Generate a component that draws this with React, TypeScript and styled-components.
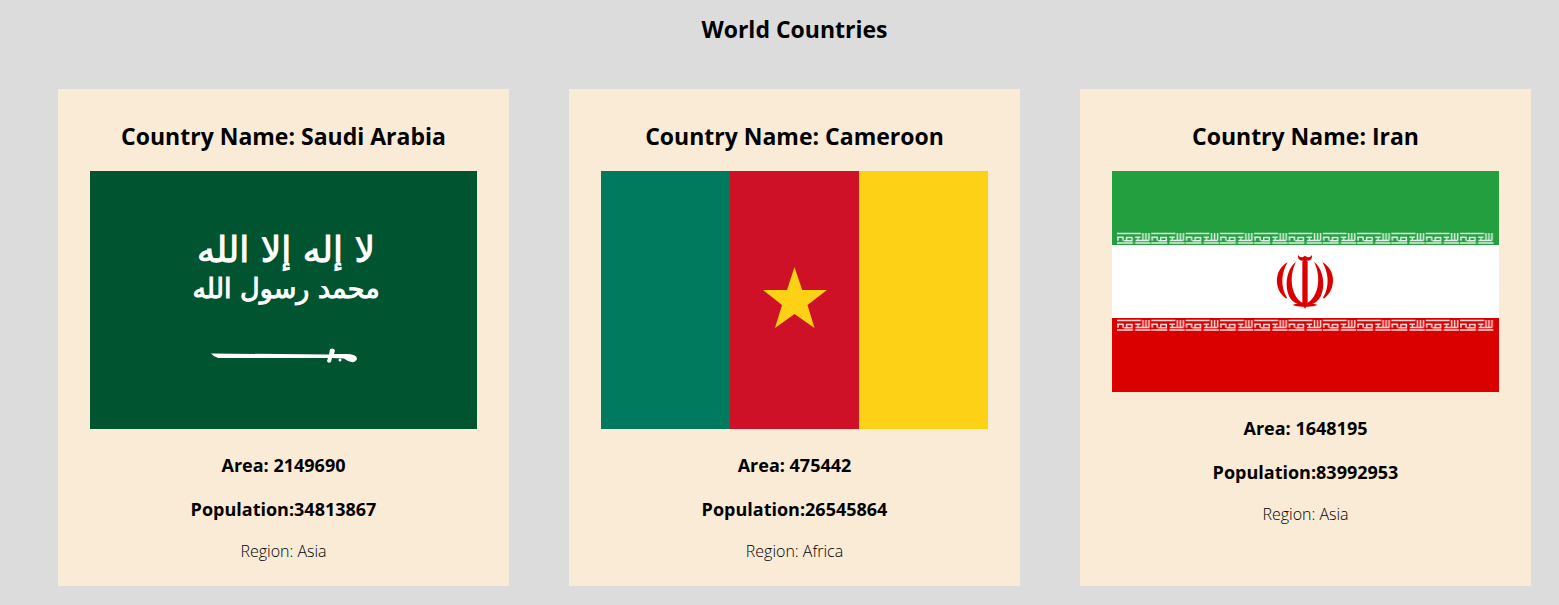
import React from "react";
import styled, { createGlobalStyle } from "styled-components";

const GlobalStyle = createGlobalStyle`
  body {
    margin: 0;
    background: #dcdcdc;
    color: #000;
    font-family: "Segoe UI", "Open Sans", "Noto Sans", sans-serif;
  }
`;

const Page = styled.main`
  padding: 11px 28px 19px 58px;
`;

const PageTitle = styled.h1`
  margin: 0 0 42px;
  font-size: 23px;
  line-height: 36px;
  font-weight: 700;
  text-align: center;
`;

const CountryGrid = styled.section`
  display: grid;
  grid-template-columns: repeat(3, minmax(0, 1fr));
  gap: 60px;
`;

const Card = styled.article`
  padding: 31px 32px 23px;
  background: #faebd7;
  text-align: center;
`;

const CountryName = styled.h2`
  margin: 0 0 19px;
  font-size: 23px;
  line-height: 32px;
  font-weight: 700;
`;

const Flag = styled.svg`
  display: block;
  width: 100%;
  height: auto;
`;

const Fact = styled.h3`
  margin: 24px 0 0;
  font-size: 18px;
  line-height: 24px;
  font-weight: 700;

  & + & {
    margin-top: 20px;
  }
`;

const Region = styled.p`
  margin: 18px 0 0;
  font-size: 16px;
  line-height: 24px;
  font-weight: 300;
`;

const Inscription = styled.text`
  fill: #fff;
  stroke: #fff;
  stroke-width: 1px;
  font-family: "DejaVu Sans", sans-serif;
  text-anchor: middle;
`;

const InscriptionLine = styled.tspan<{ $size: number }>`
  font-size: ${({ $size }) => $size}px;
`;

function SaudiFlag() {
  return (
    <Flag viewBox="0 0 387 258" role="img" aria-label="Flag of Saudi Arabia">
      <rect width="387" height="258" fill="#00542f" />
      <Inscription>
        <InscriptionLine $size={36} x="196" y="91">لا إله إلا الله</InscriptionLine>
        <InscriptionLine $size={27} x="196" y="127">محمد رسول الله</InscriptionLine>
      </Inscription>
      <g fill="#fff">
        <path d="M121 182.5 L239 183.5 L240 178 Q243 176.500 245 179 L244 183 L256 183 Q267 183 267 188 Q265 193 258 190 L254 187.500 L242 187 L241 191 Q238 193 237 190 L238 187 L128 187 Q124 186 121 182.500Z" />
        <circle cx="250" cy="189" r="1.500" />
      </g>
    </Flag>
  );
}

function CameroonFlag() {
  return (
    <Flag viewBox="0 0 387 258" role="img" aria-label="Flag of Cameroon">
      <rect width="130" height="258" fill="#007a5e" />
      <rect x="129" width="130" height="258" fill="#ce1126" />
      <rect x="258" width="129" height="258" fill="#fcd116" />
      <path
        fill="#fcd116"
        d="M193.500 96 L201.200 119 L226 119 L206.500 134 L213.500 157 L193.500 143 L174 157 L181 134 L162 119 L186 119Z"
      />
    </Flag>
  );
}

function IranFlag() {
  return (
    <Flag viewBox="0 0 387 221" role="img" aria-label="Flag of Iran">
      <defs>
        <pattern id="kufic" width="34.300" height="13" patternUnits="userSpaceOnUse">
          <path
            fill="none"
            stroke="#fff"
            strokeWidth="1.500"
            strokeOpacity="0.85"
            d="M0 1.500H24M0 11H16M18 11H33.500M0 5.200H6V8.700M9.500 8.700V5.500H15V8.700H7M1 5.200V8.700M18 5.200H23.500M18.500 8.500H32M26 1V8.500M29 1V8.500M32 1V8.500M21 5.200V8.500"
          />
        </pattern>
        <g id="crescents">
          <path d="M68 52 C25 75 27 135 62 160 L67 160 C44 125 50 80 68 52Z" />
          <path d="M93 50 C56 80 58 150 86 170 C95 177 105 180 114 180 L114 174 C82 158 68 100 93 50Z" />
        </g>
      </defs>
      <rect width="387" height="221" fill="#fff" />
      <rect width="387" height="74" fill="#239f40" />
      <rect y="147" width="387" height="74" fill="#da0000" />
      <g transform="translate(5 61)">
        <rect width="377" height="13" fill="url(#kufic)" />
      </g>
      <g transform="translate(5 148)">
        <rect width="377" height="13" fill="url(#kufic)" />
      </g>
      <g fill="#da0000" transform="translate(153 74) scale(.3333)">
        <use href="#crescents" />
        <use href="#crescents" transform="translate(240 0) scale(-1 1)" />
        <path d="M120 42 L128 50 V176 L120 192 L112 176 V50Z" />
        <path d="M99 30 Q105 39 114 36 L120 32 L126 36 Q135 39 141 30 Q143 47 128 47 H112 Q97 47 99 30Z" />
        <path d="M82 180 Q101 172 120 180 Q139 172 158 180 Q140 187 120 185 Q100 187 82 180Z" />
      </g>
    </Flag>
  );
}

type Country = {
  name: string;
  area: number;
  population: number;
  region: string;
  FlagImage: () => React.JSX.Element;
};

const countries: Country[] = [
  { name: "Saudi Arabia", area: 2149690, population: 34813867, region: "Asia", FlagImage: SaudiFlag },
  { name: "Cameroon", area: 475442, population: 26545864, region: "Africa", FlagImage: CameroonFlag },
  { name: "Iran", area: 1648195, population: 83992953, region: "Asia", FlagImage: IranFlag },
];

export default function App() {
  return (
    <>
      <GlobalStyle />
      <Page>
        <PageTitle>World Countries</PageTitle>
        <CountryGrid>
          {countries.map(({ name, area, population, region, FlagImage }) => (
            <Card key={name}>
              <CountryName>Country Name: {name}</CountryName>
              <FlagImage />
              <Fact>Area: {area}</Fact>
              <Fact>Population:{population}</Fact>
              <Region>Region: {region}</Region>
            </Card>
          ))}
        </CountryGrid>
      </Page>
    </>
  );
}
